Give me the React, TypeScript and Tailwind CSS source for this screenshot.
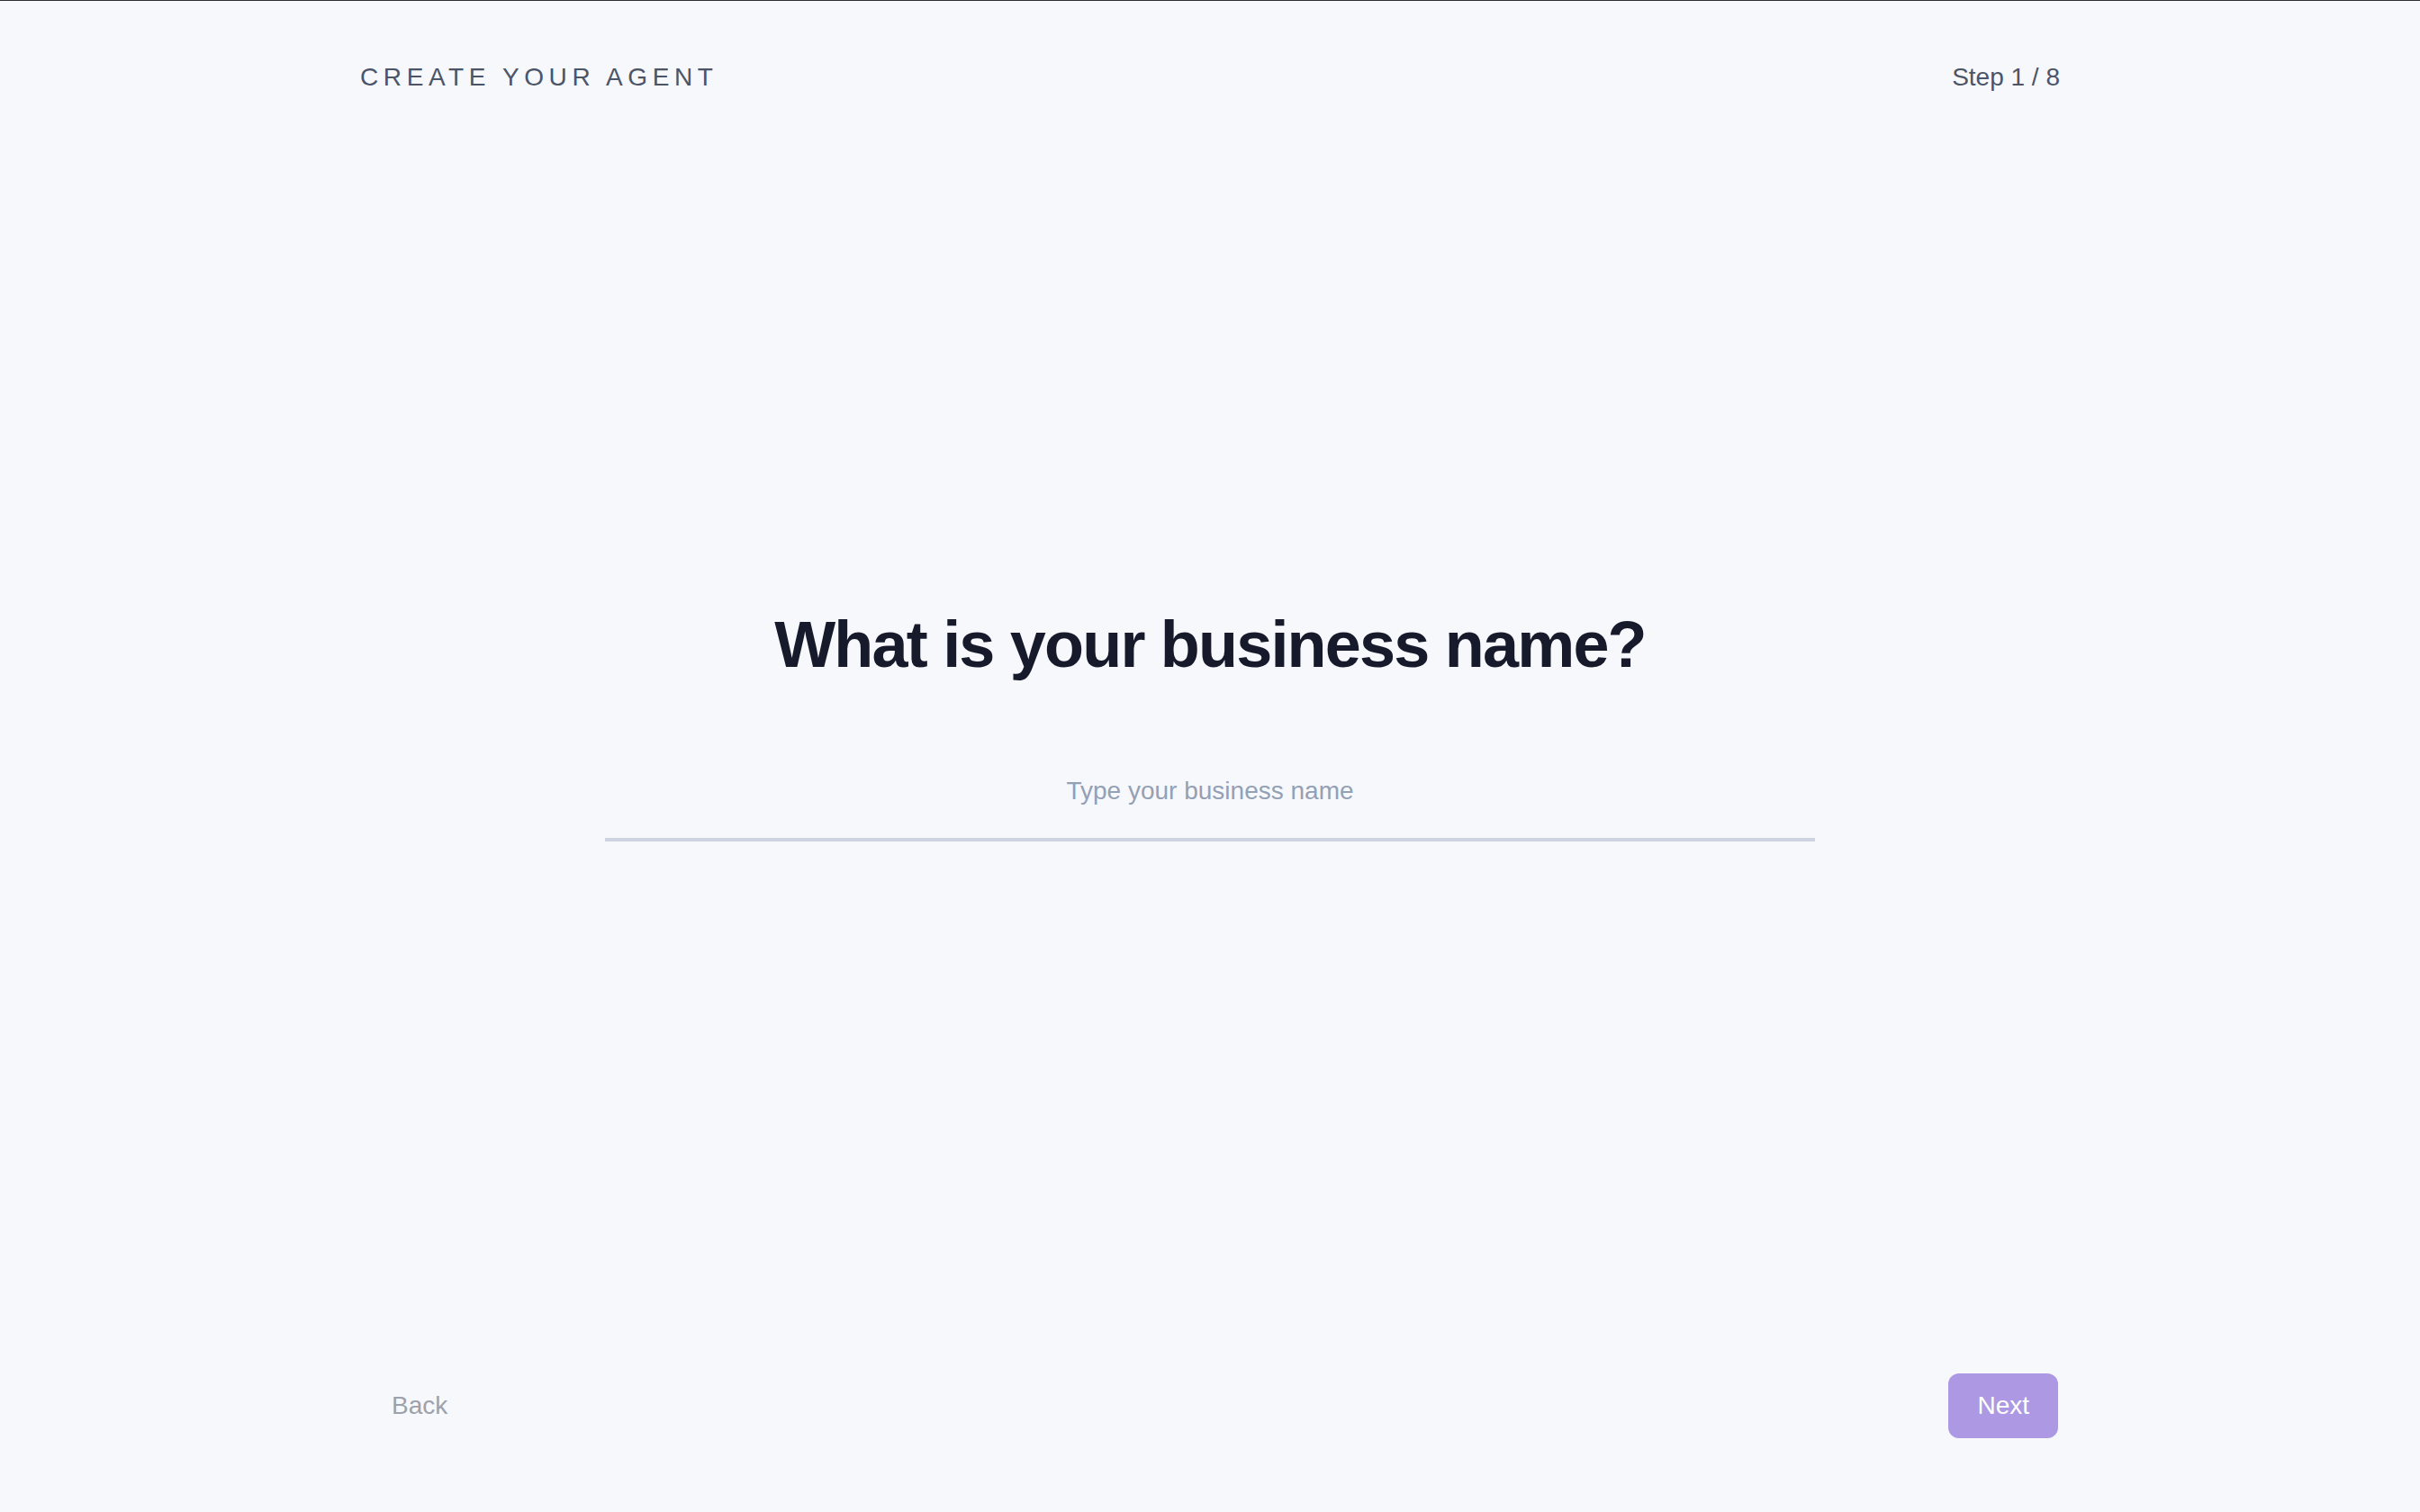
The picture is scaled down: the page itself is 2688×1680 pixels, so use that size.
import { useState } from "react";

export default function App() {
  const [name, setName] = useState("");

  return (
    <div
      className="min-h-screen flex flex-col bg-[#f7f8fc] border-t border-[#2f2f2f]"
      style={{ fontFamily: '"Liberation Sans", Arial, Helvetica, sans-serif' }}
    >
      <header className="w-full max-w-[2048px] mx-auto px-[80px] pt-[65px] flex items-center justify-between">
        <div className="text-[28px] leading-[40px] tracking-[0.2em] uppercase text-[#4b5567]">
          Create your agent
        </div>
        <div className="text-[28px] leading-[40px] text-[#4b5567]">Step 1 / 8</div>
      </header>

      <main className="flex-1 flex flex-col items-center justify-center pb-[22px]">
        <h1 className="text-[72px] leading-[80px] font-bold tracking-tight text-[#161a2b]">
          What is your business name?
        </h1>
        <input
          type="text"
          value={name}
          onChange={(e) => setName(e.target.value)}
          placeholder="Type your business name"
          className="mt-[71px] w-[1344px] bg-transparent border-b-4 border-[#cdd4df] py-[32px] text-center text-[28px] leading-[40px] text-[#161a2b] placeholder:text-[#94a0b4] outline-none"
        />
      </main>

      <footer className="w-full max-w-[2048px] mx-auto pl-[83px] pr-[82px] pb-[82px] flex items-center justify-between">
        <button className="px-[32px] py-[16px] text-[28px] leading-[40px] text-[#9ca1ab]">
          Back
        </button>
        <button
          disabled={!name}
          className="px-[32px] py-[16px] rounded-[12px] bg-[#ad98e4] text-[28px] leading-[40px] text-white"
        >
          Next
        </button>
      </footer>
    </div>
  );
}
